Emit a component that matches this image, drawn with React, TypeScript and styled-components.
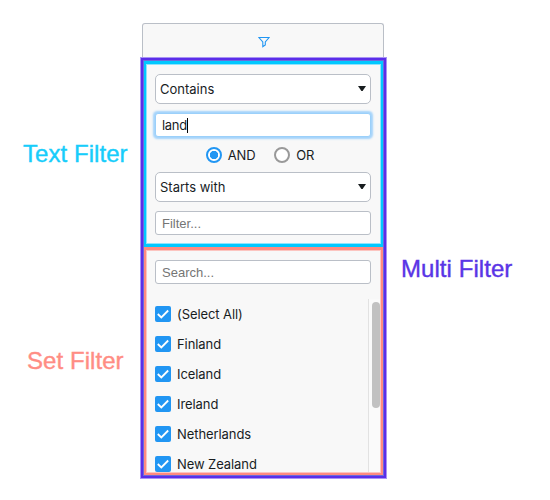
import React from 'react';
import styled, { createGlobalStyle, css } from 'styled-components';

const GlobalStyle = createGlobalStyle`
  * { box-sizing: border-box; }
  body { margin: 0; background: #fff; font-family: Inter, 'Liberation Sans', sans-serif; }
`;

const Page = styled.main`
  display: grid;
  grid-template-columns: 140px 247px 1fr;
  width: 550px;
  height: 500px;
  overflow: hidden;
`;

const Side = styled.aside<{ $top: number; $left: number }>`
  display: flex;
  flex-direction: column;
  align-items: flex-start;
  gap: 179px;
  padding: ${(p) => `${p.$top}px 0 0 ${p.$left}px`};
`;

const Caption = styled.div<{ $color: string; $indent?: number }>`
  margin-left: ${(p) => p.$indent ?? 0}px;
  color: ${(p) => p.$color};
  -webkit-text-stroke: 0.4px ${(p) => p.$color};
  font: 24px/28px 'Liberation Sans', Arial, sans-serif;
  letter-spacing: 0.06px;
  white-space: nowrap;
`;

const Column = styled.div`
  padding-top: 23px;
`;

const TabHeader = styled.header`
  display: flex;
  align-items: center;
  justify-content: center;
  width: 242px;
  height: 34px;
  margin-left: 2px;
  padding: 2px 0 0 1px;
  border: 1px solid #babfc7;
  border-bottom: 0;
  border-radius: 3px 3px 0 0;
  background: #f8f8f8;
`;

const MultiFrame = styled.section`
  height: 422px;
  padding: 4px;
  background: #f8f8f8;
  box-shadow: inset 0 0 0 1px #a893f5, inset 0 0 0 3px #5b2ee9, inset 0 0 0 4px #6b6bdc;
`;

const TextFrame = styled.div`
  display: flex;
  flex-direction: column;
  height: 186px;
  padding: 10px 10px 0 9px;
  border: solid #00c8ff;
  border-width: 3px 2px;
  box-shadow: inset 0 0 0 1px #8fe4fc;
`;

const SetFrame = styled.div`
  display: flex;
  flex-direction: column;
  height: 228px;
  border: solid #ff8a80;
  border-width: 3px 2px 2px;
  box-shadow: inset 0 0 0 1px #fcc5c0;
  padding: 1px;
`;

const fieldBase = css`
  display: flex;
  align-items: center;
  border: 1px solid #babfc7;
  background: #fff;
  color: #181d1f;
  flex-shrink: 0;
`;

const Picker = styled.div`
  ${fieldBase}
  justify-content: space-between;
  height: 30px;
  padding: 0 4px;
  border-radius: 5px;
  font-size: 13px;
`;

const Field = styled.div<{ $focused?: boolean; $gap?: number }>`
  ${fieldBase}
  height: 24px;
  margin-top: ${(p) => p.$gap ?? 0}px;
  padding: 0 6px;
  border-radius: 3px;
  font: 13px 'Liberation Sans', Arial, sans-serif;
  color: #757575;
  ${(p) =>
    p.$focused &&
    css`
      border-color: #9bd0fa;
      box-shadow: 0 0 2px 1.6px #a3d3fb;
      color: #181d1f;
      font: 13px Inter, sans-serif;
      letter-spacing: -0.3px;
    `}
`;

const Caret = styled.span`
  width: 1px;
  height: 15px;
  background: #000;
`;

const Join = styled.div`
  display: flex;
  justify-content: center;
  align-items: center;
  gap: 19px;
  height: 35px;
  padding: 1px 6px 0 0;
`;

const Option = styled.label`
  display: flex;
  align-items: center;
  gap: 6px;
  font-size: 13px;
  letter-spacing: -0.2px;
  color: #181d1f;
`;

const Radio = styled.span<{ $on?: boolean }>`
  width: 16px;
  height: 16px;
  border-radius: 50%;
  border: 2px solid ${(p) => (p.$on ? '#2196f3' : '#999')};
  background: ${(p) => (p.$on ? 'radial-gradient(circle, #2196f3 3.8px, #fff 4.5px)' : '#fff')};
`;

const SearchArea = styled.div`
  padding: 9px 9px 15px 8px;
`;

const ListArea = styled.div`
  display: flex;
  flex: 1;
  min-height: 0;
  overflow: hidden;
`;

const Items = styled.div`
  flex: 1;
  padding-left: 8px;
`;

const Item = styled.div`
  display: flex;
  align-items: center;
  gap: 6px;
  height: 30px;
  color: #181d1f;
  font-size: 13px;
  letter-spacing: -0.08px;
  white-space: nowrap;
`;

const Check = styled.span`
  display: flex;
  width: 16px;
  height: 16px;
  border-radius: 2px;
  background: #2196f3;
`;

const Track = styled.div`
  width: 12px;
  padding: 3px 0 0 3px;
  border-left: 1px solid #e2e2e2;
  background: #fafafa;
`;

const Thumb = styled.div`
  width: 8px;
  height: 106px;
  border-radius: 4px;
  background: #c1c1c1;
`;

const Arrow = () => (
  <svg width="8" height="6" viewBox="0 0 8 6">
    <path d="M0 0H8L4.6 5H3.4Z" fill="#181d1f" />
  </svg>
);

const countries = ['(Select All)', 'Finland', 'Iceland', 'Ireland', 'Netherlands', 'New Zealand'];

export default function App() {
  return (
    <>
      <GlobalStyle />
      <Page>
        <Side $top={140} $left={23}>
          <Caption $color="#17cdfb">Text Filter</Caption>
          <Caption $color="#ff8d84" $indent={4}>Set Filter</Caption>
        </Side>
        <Column>
          <TabHeader>
            <svg width="12" height="12" viewBox="0 0 12 12" fill="none" stroke="#2196f3">
              <path d="M.9 1.5H11.1L7.3 6V9L4.8 10.8V6Z" strokeWidth="1.1" />
            </svg>
          </TabHeader>
          <MultiFrame>
            <TextFrame>
              <Picker>Contains<Arrow /></Picker>
              <Field $focused $gap={9}>land<Caret /></Field>
              <Join>
                <Option><Radio $on />AND</Option>
                <Option><Radio />OR</Option>
              </Join>
              <Picker>Starts with<Arrow /></Picker>
              <Field $gap={9}>Filter...</Field>
            </TextFrame>
            <SetFrame>
              <SearchArea>
                <Field>Search...</Field>
              </SearchArea>
              <ListArea>
                <Items>
                  {countries.map((name) => (
                    <Item key={name}>
                      <Check>
                        <svg width="16" height="16" viewBox="0 0 16 16" fill="none">
                          <path d="M2.8 8 6.3 11.4 13.2 4.5" stroke="#fff" strokeWidth="1.8" />
                        </svg>
                      </Check>
                      {name}
                    </Item>
                  ))}
                </Items>
                <Track><Thumb /></Track>
              </ListArea>
            </SetFrame>
          </MultiFrame>
        </Column>
        <Side $top={255} $left={14}>
          <Caption $color="#5a35e6">Multi Filter</Caption>
        </Side>
      </Page>
    </>
  );
}
